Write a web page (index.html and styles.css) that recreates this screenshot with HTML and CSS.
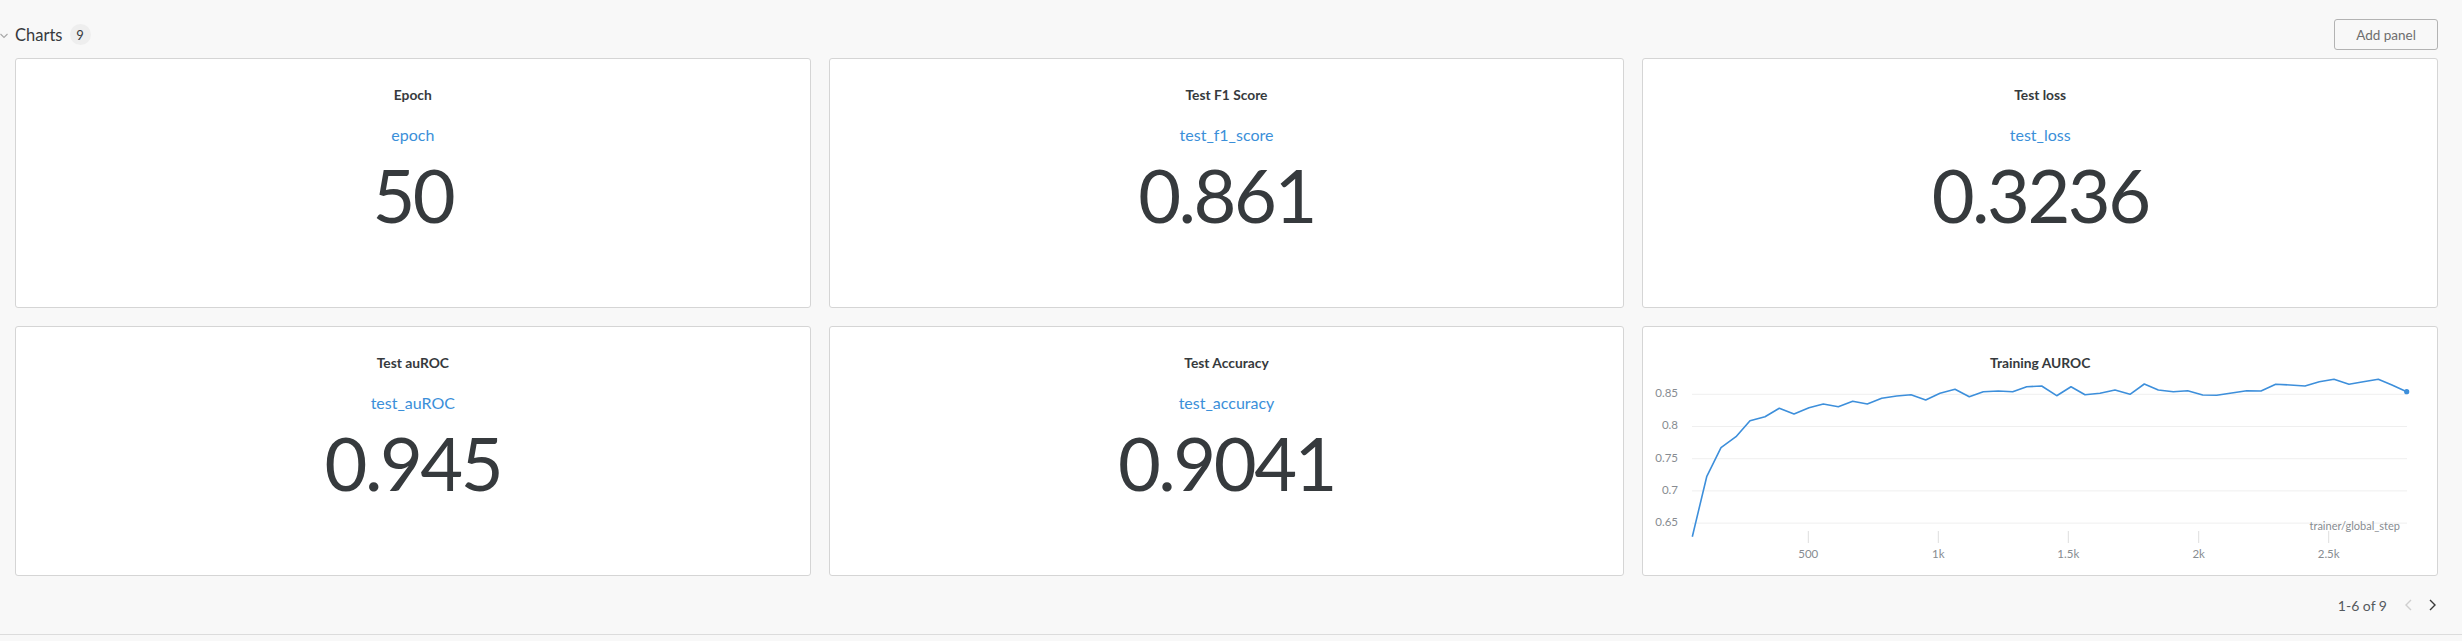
FILE: index.html
```html
<!DOCTYPE html>
<html>
<head>
<meta charset="utf-8">
<link rel="stylesheet" href="styles.css">
</head>
<body>
<div class="section">
  <div class="section-header">
    <div class="title-group">
      <svg class="chev-down" width="8" height="6" viewBox="0 0 8 6"><path d="M0.5 1 L4 4.5 L7.5 1" fill="none" stroke="#a8a8a8" stroke-width="1.1"/></svg>
      <span class="section-title">Charts</span>
      <span class="badge">9</span>
    </div>
    <button class="add-btn">Add panel</button>
  </div>

  <div class="grid">
    <div class="panel stat">
      <div class="panel-title">Epoch</div>
      <div class="metric-key">epoch</div>
      <div class="metric-value">50</div>
    </div>
    <div class="panel stat">
      <div class="panel-title">Test F1 Score</div>
      <div class="metric-key">test_f1_score</div>
      <div class="metric-value">0.861</div>
    </div>
    <div class="panel stat">
      <div class="panel-title">Test loss</div>
      <div class="metric-key">test_loss</div>
      <div class="metric-value">0.3236</div>
    </div>
    <div class="panel stat">
      <div class="panel-title">Test auROC</div>
      <div class="metric-key">test_auROC</div>
      <div class="metric-value">0.945</div>
    </div>
    <div class="panel stat">
      <div class="panel-title">Test Accuracy</div>
      <div class="metric-key">test_accuracy</div>
      <div class="metric-value">0.9041</div>
    </div>
    <div class="panel chart">
      <div class="panel-title">Training AUROC</div>
      <svg class="plot" width="794" height="203">
        <g class="grid-lines">
          <line x1="49" y1="22.3" x2="764" y2="22.3"/>
          <line x1="49" y1="54.5" x2="764" y2="54.5"/>
          <line x1="49" y1="86.7" x2="764" y2="86.7"/>
          <line x1="49" y1="118.9" x2="764" y2="118.9"/>
          <line x1="49" y1="151.1" x2="764" y2="151.1"/>
        </g>
        <g class="y-labels">
          <text x="35" y="22.3">0.85</text>
          <text x="35" y="54.5">0.8</text>
          <text x="35" y="86.7">0.75</text>
          <text x="35" y="118.9">0.7</text>
          <text x="35" y="151.1">0.65</text>
        </g>
        <g class="ticks">
          <line x1="165.3" y1="159" x2="165.3" y2="171"/>
          <line x1="295.3" y1="159" x2="295.3" y2="171"/>
          <line x1="425.3" y1="159" x2="425.3" y2="171"/>
          <line x1="555.7" y1="159" x2="555.7" y2="171"/>
          <line x1="685.7" y1="159" x2="685.7" y2="171"/>
        </g>
        <g class="x-labels">
          <text x="165.3" y="183">500</text>
          <text x="295.3" y="183">1k</text>
          <text x="425.3" y="183">1.5k</text>
          <text x="555.7" y="183">2k</text>
          <text x="685.7" y="183">2.5k</text>
        </g>
        <text class="x-title" x="757" y="155">trainer/global_step</text>
        <polyline class="series" points="49.3,164.7 63.7,104.7 78,75.7 93,64.7 107,48.7 122,44.7 136.3,36.3 151,42 166,35.7 180.3,32 195.3,34.7 209.7,29.3 224.3,32 238.7,26.3 253.7,24 268,22.7 282.7,28 297,21.3 312,17.3 326.3,24.7 340.3,19.7 355.3,19 369.7,19.7 383.7,14.7 398.7,14 413.7,23.7 428,14.7 442,22.7 457,21.3 472,18 487,22.3 501.3,12 515.3,18 530.3,19.7 544.7,18.7 559.7,23 573.7,23.3 588.7,21 603.7,18.7 618,19 632.7,12.3 647,13 662,14 676.3,9.7 691,7.3 706,12.3 720.3,9.7 735.3,7.3 749,13 763.7,19.7"/>
        <circle class="end-dot" cx="763.7" cy="19.7" r="2.6"/>
      </svg>
    </div>
  </div>

  <div class="pager">
    <span class="pager-text">1-6 of 9</span>
    <svg class="pager-prev" width="8" height="12" viewBox="0 0 8 12"><path d="M7 1 L2 6 L7 11" fill="none" stroke="#cfcfcf" stroke-width="1.4"/></svg>
    <svg class="pager-next" width="8" height="12" viewBox="0 0 8 12"><path d="M1 1 L6 6 L1 11" fill="none" stroke="#3a3a3a" stroke-width="1.4"/></svg>
  </div>
  <div class="divider"></div>
</div>
</body>
</html>
```

FILE: styles.css
```css
html, body {
  margin: 0;
  padding: 0;
}
body {
  background: #f8f8f8;
  font-family: Lato, "Noto Sans", sans-serif;
  color: #363a3d;
  width: 2462px;
  height: 641px;
  overflow: hidden;
}
.section {
  padding-top: 19px;
}
.section-header {
  display: flex;
  justify-content: space-between;
  align-items: center;
  height: 31px;
  padding-right: 24px;
}
.title-group {
  display: flex;
  align-items: center;
}
.chev-down {
  margin-right: 7px;
  margin-top: 2px;
}
.section-title {
  font-size: 16.5px;
  color: #363a3d;
}
.badge {
  margin-left: 7px;
  width: 21px;
  height: 21px;
  border-radius: 50%;
  background: #eeeeee;
  font-size: 13px;
  color: #363a3d;
  display: flex;
  align-items: center;
  justify-content: center;
}
.add-btn {
  width: 104px;
  height: 31px;
  box-sizing: border-box;
  border: 1px solid #b3b3b3;
  border-radius: 3px;
  background: #f8f8f8;
  font-family: Lato, "Noto Sans", sans-serif;
  font-size: 13.5px;
  color: #6e6e6e;
  padding: 0;
}
.grid {
  margin: 8px 24px 0 15px;
  display: grid;
  grid-template-columns: repeat(3, 1fr);
  grid-auto-rows: 250px;
  gap: 18px;
}
.panel {
  background: #fff;
  border: 1px solid #d5d5d5;
  border-radius: 3px;
  box-sizing: border-box;
  display: flex;
  flex-direction: column;
  align-items: center;
  overflow: hidden;
}
.panel-title {
  margin-top: 27px;
  font-size: 13.8px;
  font-weight: 700;
  line-height: 18px;
  color: #363a3d;
}
.metric-key {
  margin-top: 21px;
  font-size: 16px;
  line-height: 20px;
  color: #3b8fd9;
}
.metric-value {
  margin-top: 10px;
  font-size: 74px;
  line-height: 80px;
  letter-spacing: -2.5px;
  color: #363a3d;
}
.plot {
  display: block;
  align-self: stretch;
}
.grid-lines line {
  stroke: #efefef;
  stroke-width: 1;
}
.y-labels text {
  font-family: Lato, "Noto Sans", sans-serif;
  font-size: 11.5px;
  fill: #878c91;
  text-anchor: end;
  dominant-baseline: middle;
}
.ticks line {
  stroke: #dedede;
  stroke-width: 1;
}
.x-labels text {
  font-family: Lato, "Noto Sans", sans-serif;
  font-size: 11.5px;
  fill: #878c91;
  text-anchor: middle;
  dominant-baseline: middle;
}
.x-title {
  font-family: Lato, "Noto Sans", sans-serif;
  font-size: 11px;
  fill: #878c91;
  text-anchor: end;
  dominant-baseline: middle;
}
.series {
  fill: none;
  stroke: #3d8fdb;
  stroke-width: 1.6;
  stroke-linejoin: round;
}
.end-dot {
  fill: #3d8fdb;
}
.pager {
  height: 58px;
  display: flex;
  justify-content: flex-end;
  align-items: center;
  padding-right: 25px;
}
.pager-text {
  font-size: 14px;
  color: #555a5e;
  margin-right: 17px;
}
.pager-prev {
  margin-right: 17px;
}
.divider {
  border-top: 1px solid #dcdcdc;
}
```
